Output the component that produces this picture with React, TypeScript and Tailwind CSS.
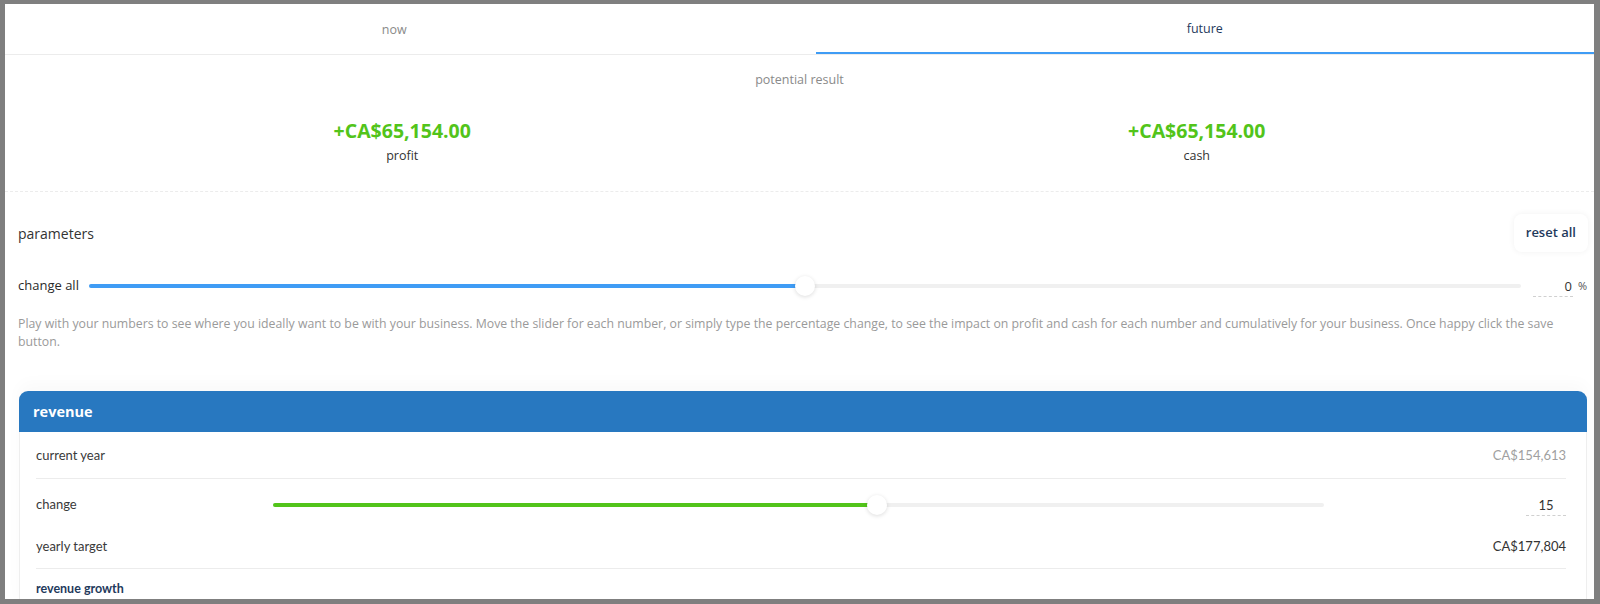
import React from 'react';

const ubuntu = "font-['Open_Sans',sans-serif]";
const lato = "font-['Lato',sans-serif]";

function Slider({ pct, fill, className }: { pct: number; fill: string; className?: string }) {
  return (
    <div className={`relative h-5 flex items-center ${className ?? ''}`}>
      <div className="h-[4px] w-full rounded-full bg-[#f0f0f0]" />
      <div className={`absolute left-0 h-[4px] rounded-full ${fill}`} style={{ width: `${pct}%` }} />
      <div
        className="absolute h-[20px] w-[20px] -translate-x-1/2 rounded-full bg-white shadow-[0_1px_4px_rgba(0,0,0,.14)]"
        style={{ left: `${pct}%` }}
      />
    </div>
  );
}

export default function App() {
  return (
    <div className="h-[604px] overflow-hidden bg-[#7f7f7f] pt-[4px] pl-[5px] pr-[6px] pb-[5px]">
      <div className="h-full overflow-hidden bg-white">
        {/* tabs */}
        <div className={`flex h-[51px] gap-[32px] border-b border-[#ececec] text-[12.5px] ${ubuntu}`}>
          <div className="flex flex-1 items-center justify-center pt-[3px] text-[#8a8a8a]">now</div>
          <div className="flex flex-1 items-center justify-center border-b-2 border-[#3f9cf5] pt-[3px] text-[#1f3a5c]">
            future
          </div>
        </div>

        {/* potential result */}
        <div className={`border-b border-dashed border-[#ececec] pt-[16px] pb-[26px] ${ubuntu}`}>
          <div className="text-center text-[12.5px] leading-[18px] text-[#8a8a8a]">potential result</div>
          <div className="mt-[30px] grid grid-cols-2">
            {['profit', 'cash'].map((l) => (
              <div key={l} className="flex flex-col items-center gap-[4px]">
                <div className="text-[19.5px] font-bold leading-[24px] text-[#52c41a]">+CA$65,154.00</div>
                <div className="text-[12.5px] leading-[18px] text-[#333]">{l}</div>
              </div>
            ))}
          </div>
        </div>

        {/* parameters */}
        <div className={`pl-[13px] pr-[6px] pt-[22px] ${ubuntu}`}>
          <div className="flex items-center justify-between">
            <span className="text-[14px] text-[#333]">parameters</span>
            <button className="h-[38px] rounded-[8px] bg-white px-[12px] text-[13px] font-semibold text-[#1f3a5c] shadow-[0_0_6px_rgba(0,0,0,.06)]">
              reset all
            </button>
          </div>

          <div className="mt-[22px] flex h-[24px] items-center">
            <span className="w-[72px] text-[13px] font-medium text-[#2a2a2a]">change all</span>
            <Slider pct={50} fill="bg-[#3f9cf5]" className="ml-[-1px] flex-1" />
            <div className="ml-[12px] flex items-center">
              <span className="w-[40px] border-b border-dashed border-[#d0d0d0] pr-[1px] text-right text-[13px] leading-[20px] text-[#333]">
                0
              </span>
              <span className="ml-[5px] mr-[1px] text-[11px] text-[#555]">%</span>
            </div>
          </div>

          <p className="mt-[17px] pr-[30px] text-[12.3px] leading-[18px] text-[#9a9a9a]">
            Play with your numbers to see where you ideally want to be with your business. Move the slider for each
            number, or simply type the percentage change, to see the impact on profit and cash for each number and
            cumulatively for your business. Once happy click the save button.
          </p>
        </div>

        {/* revenue card */}
        <div className="mt-[40px] ml-[14px] mr-[7px] rounded-t-[9px] border-x border-[#eeeeee] shadow-[0_-8px_16px_rgba(0,0,0,.025)]">
          <div className={`-mx-px flex h-[41px] items-center rounded-t-[9px] bg-[#2878c0] pl-[14px] ${ubuntu}`}>
            <span className="text-[14.5px] font-bold text-white">revenue</span>
          </div>
          <div className={`pl-[16px] pr-[20px] ${lato}`}>
            <div className="flex h-[47px] items-center justify-between border-b border-[#ececec] pt-[2px]">
              <span className="text-[13px] text-[#3a3a3a]">current year</span>
              <span className="text-[13px] text-[#a0a0a0]">CA$154,613</span>
            </div>
            <div className="border-b border-[#ececec] pt-[5px]">
              <div className="flex h-[42px] items-center">
                <span className="w-[237px] text-[13px] text-[#3a3a3a]">change</span>
                <Slider pct={57.5} fill="bg-[#52c41a]" className="w-[1051px]" />
                <div className="flex flex-1 justify-end">
                  <span className="w-[40px] border-b border-dashed border-[#d0d0d0] text-center text-[13px] leading-[20px] text-[#333]">
                    15
                  </span>
                </div>
              </div>
              <div className="flex h-[42px] items-center justify-between">
                <span className="text-[13px] text-[#3a3a3a]">yearly target</span>
                <span className="text-[13px] text-[#333]">CA$177,804</span>
              </div>
            </div>
            <div className="flex h-[40px] items-center">
              <span className="text-[12.5px] font-bold text-[#1f3a5c]">revenue growth</span>
            </div>
          </div>
        </div>
      </div>
    </div>
  );
}
